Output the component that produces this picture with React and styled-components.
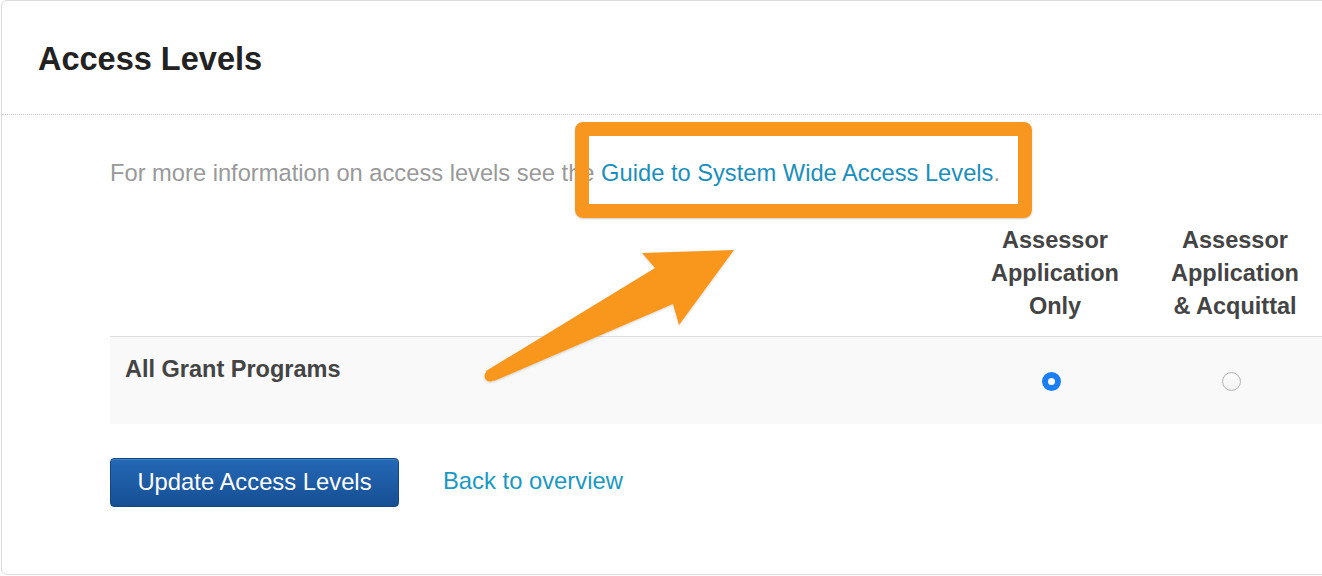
import styled, { createGlobalStyle } from "styled-components";

const GlobalStyle = createGlobalStyle`
  html, body {
    margin: 0;
    padding: 0;
    background: #fff;
    overflow: hidden;
  }
  body {
    font-family: "Liberation Sans", Arial, Helvetica, sans-serif;
  }
`;

const columns = [
  { id: "app", lines: ["Assessor", "Application", "Only"] },
  { id: "acq", lines: ["Assessor", "Application", "& Acquittal"] },
];

const App = () => {
  return (
    <Page>
      <GlobalStyle />
      <Card>
        <CardHeader>
          <Title>Access Levels</Title>
        </CardHeader>
        <CardBody>
          <Intro>
            For more information on access levels see the{" "}
            <Link href="#">Guide to System Wide Access Levels</Link>.
          </Intro>
          <LevelsTable>
            <colgroup>
              <col style={{ width: 855 }} />
              <col style={{ width: 180 }} />
              <col style={{ width: 180 }} />
            </colgroup>
            <thead>
              <tr>
                <HeadCell />
                {columns.map((c) => (
                  <HeadCell key={c.id}>
                    {c.lines.map((l) => (
                      <div key={l}>{l}</div>
                    ))}
                  </HeadCell>
                ))}
              </tr>
            </thead>
            <tbody>
              <Row>
                <NameCell>All Grant Programs</NameCell>
                <RadioCell>
                  <Radio type="radio" name="level" defaultChecked />
                </RadioCell>
                <RadioCell>
                  <Radio type="radio" name="level" />
                </RadioCell>
              </Row>
            </tbody>
          </LevelsTable>
          <Actions>
            <PrimaryButton>Update Access Levels</PrimaryButton>
            <BackLink href="#">Back to overview</BackLink>
          </Actions>
        </CardBody>
      </Card>

      <Highlight />
      <Annotation width="1322" height="576" viewBox="0 0 1322 576">
        <defs>
          <filter id="soft" x="-10%" y="-10%" width="120%" height="120%">
            <feDropShadow dx="0" dy="1" stdDeviation="1.2" floodColor="#000" floodOpacity="0.18" />
          </filter>
        </defs>
        <g fill="#F8971F" filter="url(#soft)">
          <polygon points="486,371 655,268 642,253 734,250 679,325 673,304 494,381" />
          <circle cx="490" cy="376" r="5.5" />
        </g>
      </Annotation>
    </Page>
  );
};

const Page = styled.div`
  position: relative;
  width: 1322px;
  height: 576px;
  overflow: hidden;
`;

const Card = styled.div`
  margin-left: 1px;
  width: 1400px;
  height: 573px;
  border: 1px solid #dcdcdc;
  border-radius: 6px;
  background: #fff;
`;

const CardHeader = styled.div`
  height: 114px;
  padding: 2px 36px 0;
  box-sizing: border-box;
  display: flex;
  align-items: center;
  border-bottom: 1px dotted #c8c8c8;
`;

const Title = styled.h1`
  margin: 0;
  font-size: 32.5px;
  line-height: 32px;
  font-weight: bold;
  color: #222;
`;

const CardBody = styled.div`
  padding-left: 108px;
`;

const Intro = styled.p`
  margin: 41px 0 0;
  font-size: 23.7px;
  line-height: 34px;
  color: #999;
`;

const Link = styled.a`
  color: #1a8fbd;
  text-decoration: none;
`;

const LevelsTable = styled.table`
  border-collapse: collapse;
  table-layout: fixed;
  width: 1215px;
`;

const HeadCell = styled.th`
  padding: 34px 0 13px;
  vertical-align: bottom;
  text-align: center;
  font-size: 23.5px;
  line-height: 33px;
  font-weight: bold;
  color: #444;
  border-bottom: 1px solid #ddd;
`;

const Row = styled.tr`
  background: #f9f9f9;
  height: 87px;
`;

const NameCell = styled.td`
  padding: 16px 15px 0;
  vertical-align: top;
  font-size: 23.5px;
  line-height: 33px;
  font-weight: bold;
  color: #444;
`;

const RadioCell = styled.td`
  vertical-align: middle;
  text-align: center;
  padding: 2px 0 0;
`;

const Radio = styled.input`
  appearance: none;
  box-sizing: border-box;
  width: 19px;
  height: 19px;
  margin: 0 8px 0 0;
  vertical-align: middle;
  border-radius: 50%;
  border: 1px solid #b5b5b5;
  background: linear-gradient(#fff, #f1f1f1);
  box-shadow: inset 0 1px 1px rgba(0, 0, 0, 0.06);

  &:checked {
    border: 6px solid #1a7ff2;
    background: #fff;
  }
`;

const Actions = styled.div`
  display: flex;
  align-items: center;
  gap: 44px;
  margin-top: 34px;
`;

const PrimaryButton = styled.button`
  width: 289px;
  height: 49px;
  padding: 0;
  border: 1px solid #134784;
  border-radius: 4px;
  background: linear-gradient(#2568b6, #164f93);
  color: #fff;
  font-family: inherit;
  font-size: 23.8px;
  box-shadow: inset 0 1px 0 rgba(255, 255, 255, 0.15);
`;

const BackLink = styled.a`
  color: #1a98c4;
  font-size: 23.8px;
  text-decoration: none;
  margin-top: -3px;
`;

const Highlight = styled.div`
  position: absolute;
  left: 575px;
  top: 122px;
  width: 457px;
  height: 96px;
  box-sizing: border-box;
  border: 14px solid #f8971f;
  border-radius: 8px;
  box-shadow: 0 1px 2px rgba(0, 0, 0, 0.2);
  pointer-events: none;
`;

const Annotation = styled.svg`
  position: absolute;
  left: 0;
  top: 0;
  pointer-events: none;
`;

export default App;
